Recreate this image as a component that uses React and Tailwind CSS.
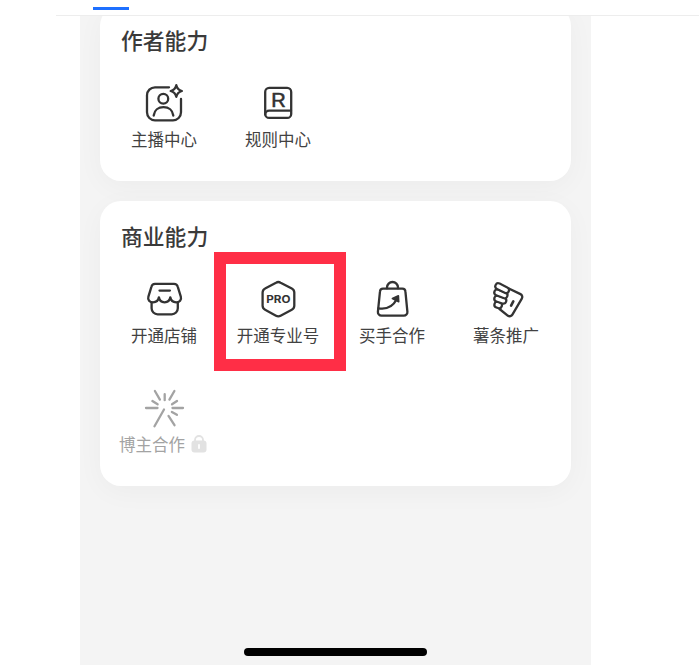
import clsx from 'clsx'

function Icon({ children, className }) {
  return (
    <svg
      viewBox="0 0 44 44"
      fill="none"
      stroke="currentColor"
      strokeWidth="2.3"
      strokeLinecap="round"
      strokeLinejoin="round"
      className={clsx('w-11 h-11 shrink-0 overflow-visible', className)}
    >
      {children}
    </svg>
  )
}

function AnchorIcon() {
  return (
    <Icon>
      <path d="M27 6.3H13a8 8 0 0 0-8 8v17a8 8 0 0 0 8 8h18a8 8 0 0 0 8-8V18" />
      <circle cx="21.3" cy="17.7" r="4.9" />
      <path d="M11.7 34.5c.6-5.3 4.6-8.3 9.8-8.3s9.2 3 9.8 8.3" />
      <path d="M34.3 4.2c.8 3.4 2.2 4.9 5.6 5.8-3.4.9-4.8 2.4-5.6 5.8-.8-3.4-2.2-4.9-5.6-5.8 3.4-.9 4.8-2.4 5.6-5.8Z" />
    </Icon>
  )
}

function RulesIcon() {
  return (
    <Icon>
      <rect x="9.2" y="6.9" width="26" height="30" rx="4" />
      <path d="M35 29.7H13.2a4 3.7 0 0 0-4 3.7" />
      <text
        x="14.8"
        y="25.6"
        fontSize="18.5"
        fontWeight="400"
        textLength="15"
        lengthAdjust="spacingAndGlyphs"
        fill="currentColor"
        strokeWidth="0.3"
        className="font-['Inter',sans-serif]"
      >
        R
      </text>
    </Icon>
  )
}

function ShopIcon() {
  return (
    <Icon>
      <path d="M13 6.8h19a4 4 0 0 1 3.8 3l3 9.8c1 3.2-1.3 5.7-4.6 5.7-3 0-5.4-2-5.9-5-.5 3-2.6 5-5.7 5s-5.2-2-5.7-5c-.5 3-2.9 5-5.9 5-3.3 0-5.6-2.5-4.6-5.7l3-9.8a4 4 0 0 1 3.6-3Z" />
      <path d="M9.6 25.5v5.8a6 6 0 0 0 6 6h14.2a6 6 0 0 0 6-6v-5.8" />
      <path d="M17.5 13.6h10.4" />
    </Icon>
  )
}

function ProIcon() {
  return (
    <Icon>
      <path d="M20 5.7a4.6 4.6 0 0 1 4.6 0l11.2 5.9a4.6 4.6 0 0 1 2.5 4v13.2a4.6 4.6 0 0 1-2.5 4l-11.2 5.9a4.6 4.6 0 0 1-4.6 0L9.1 32.8a4.6 4.6 0 0 1-2.5-4V15.6a4.6 4.6 0 0 1 2.5-4Z" />
      <text
        x="10.3"
        y="26.3"
        fontSize="10.4"
        fontWeight="700"
        textLength="24.2"
        lengthAdjust="spacingAndGlyphs"
        fill="currentColor"
        stroke="none"
        className="font-['Inter',sans-serif]"
      >
        PRO
      </text>
    </Icon>
  )
}

function BagIcon() {
  return (
    <Icon>
      <path d="M13 11.6h19.4a3 3 0 0 1 3 2.8l2 20.4a3.6 3.6 0 0 1-3.6 3.9H11.5a3.6 3.6 0 0 1-3.6-3.9l2.1-20.4a3 3 0 0 1 3-2.8Z" />
      <path d="M17 11.3v-.8a5.5 5.5 0 0 1 11 0v.8" />
      <path d="M8.4 31.3c8.3 1.3 14.6-1.8 18.3-9" />
      <path d="m28.4 18.8.3 6-6.3-3.3Z" fill="currentColor" strokeWidth="1.6" />
    </Icon>
  )
}

// each finger is a dark capsule with a white one inside, lowest first
const fingers = ['M13.4 27.6l1.6.6', 'M13.3 21.600l6 2', 'M13.300 15.400l7.200 2.900', 'M14.300 9.300l7.700 3.800']

function TicketIcon() {
  return (
    <Icon>
      <path d="m24.800 11.500 11.700 5.600a3.200 3.200 0 0 1 1.300 4.500l-9.400 16.100a3.200 3.200 0 0 1-4.400 1.100L15.500 32Z" />
      {fingers.map(d => (
        <g key={d}>
          <path d={d} strokeWidth="8.2" />
          <path d={d} stroke="#fff" strokeWidth="3.8" />
        </g>
      ))}
      <path d="m29.300 24.400-2.200 4.200" strokeWidth="2.6" />
    </Icon>
  )
}

function BurstIcon() {
  return (
    <Icon className="text-[#a3a3a3]">
      <path d="M4 22h11.500M30.500 22H41M12.900 5l5 8.600M22.700 8.200v6M32.400 5l-5 8.600M10.400 15l5.200 3.300M35 15l-5 3.300M22 23.500l-9.500 16.700M26.500 29.900l6 9.300M29.900 25.900l5 2.900" />
    </Icon>
  )
}

function LockIcon() {
  return (
    <svg viewBox="0 0 16 18" className="w-4 h-[18px] shrink-0" fill="none">
      <path d="M4 8V5a4 4 0 0 1 8 0v3" stroke="#e2e2e2" strokeWidth="1.8" />
      <rect x="0.5" y="5.5" width="15" height="12" rx="3" fill="#e2e2e2" />
      <path d="M8 10v3" stroke="#fff" strokeWidth="1.8" strokeLinecap="round" />
    </svg>
  )
}

const sections = [
  {
    title: '作者能力',
    items: [
      { label: '主播中心', icon: AnchorIcon },
      { label: '规则中心', icon: RulesIcon },
    ],
  },
  {
    title: '商业能力',
    items: [
      { label: '开通店铺', icon: ShopIcon },
      { label: '开通专业号', icon: ProIcon, highlighted: true },
      { label: '买手合作', icon: BagIcon },
      { label: '薯条推广', icon: TicketIcon },
      { label: '博主合作', icon: BurstIcon, locked: true },
    ],
  },
]

function Item({ label, icon: ItemIcon, highlighted, locked }) {
  return (
    <div className="relative flex flex-col items-center text-[#333]">
      <ItemIcon />
      <div
        className={clsx(
          'h-[28px] mb-0.5 flex items-center gap-1.5 text-[16.5px] leading-[28px] whitespace-nowrap',
          locked ? 'text-[#a3a3a3] -ml-[2px]' : 'text-[#424242]'
        )}
      >
        <span>{label}</span>
        {locked && <LockIcon />}
      </div>
      {highlighted && (
        <div className="absolute -left-[7px] -top-[25px] w-[132px] h-[119px] border-12 border-[#ff2e46]" />
      )}
    </div>
  )
}

function Card({ title, items }) {
  return (
    <section className="bg-white rounded-[21px] pt-5 pb-[25.5px] pl-[7px] shadow-[0_6px_28px_rgba(0,0,0,0.035)]">
      <h2 className="pl-3.5 text-[21.8px] leading-[30px] font-medium text-[#3a3a3a]">{title}</h2>
      <div className="mt-[26px] grid grid-cols-[repeat(4,114px)] gap-y-[35px]">
        {items.map(item => (
          <Item key={item.label} {...item} />
        ))}
      </div>
    </section>
  )
}

export default function App() {
  return (
    <div className="w-[699px] h-[665px] bg-white overflow-hidden flex flex-col font-['Noto_Sans_CJK_SC',sans-serif]">
      <header className="ml-14 h-4 shrink-0 border-b border-[#ededed] pt-[7px] pl-[37px]">
        <div className="w-9 h-[3px] bg-[#1e70ff]" />
      </header>

      <main className="ml-20 w-[511px] flex-1 min-h-0 bg-[#f4f4f4] overflow-hidden flex flex-col">
        <div className="-mt-[11px] ml-5 w-[471px] flex flex-col gap-[20.5px]">
          {sections.map(section => (
            <Card key={section.title} {...section} />
          ))}
        </div>
        <div className="mt-auto mb-[9.5px] ml-[164px] w-[183px] h-[7.5px] shrink-0 rounded-full bg-black" />
      </main>
    </div>
  )
}
